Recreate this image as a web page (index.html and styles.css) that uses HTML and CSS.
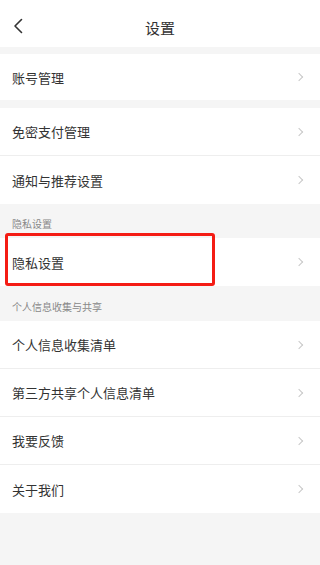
FILE: index.html
```html
<!DOCTYPE html>
<html lang="zh-CN">
<head>
<meta charset="utf-8">
<title>设置</title>
<link rel="stylesheet" href="styles.css">
</head>
<body>
<div class="page">
  <header class="nav">
    <span class="back">
      <svg width="12" height="16" viewBox="0 0 12 16"><path d="M9.5 1.5 L3 8 L9.5 14.5" fill="none" stroke="#333" stroke-width="1.6" stroke-linecap="round" stroke-linejoin="round"/></svg>
    </span>
    <h1 class="title">设置</h1>
  </header>

  <div class="group g1">
    <div class="row short"><span>账号管理</span><i class="arrow"></i></div>
  </div>

  <div class="group g2">
    <div class="row"><span>免密支付管理</span><i class="arrow"></i></div>
    <div class="row"><span>通知与推荐设置</span><i class="arrow"></i></div>
  </div>

  <div class="section s1">隐私设置</div>
  <div class="group">
    <div class="row highlight"><span>隐私设置</span><i class="arrow"></i><div class="mark"></div></div>
  </div>

  <div class="section s2">个人信息收集与共享</div>
  <div class="group">
    <div class="row"><span>个人信息收集清单</span><i class="arrow"></i></div>
    <div class="row"><span>第三方共享个人信息清单</span><i class="arrow"></i></div>
    <div class="row"><span>我要反馈</span><i class="arrow"></i></div>
    <div class="row"><span>关于我们</span><i class="arrow"></i></div>
  </div>
</div>
</body>
</html>
```

FILE: styles.css
```css
html, body {
  margin: 0;
  padding: 0;
  background: #f5f5f5;
  font-family: "Noto Sans CJK SC", "Noto Sans", sans-serif;
}
.page {
  min-height: 565px;
  background: #f5f5f5;
}
.nav {
  height: 47px;
  background: #fff;
  display: flex;
  align-items: center;
  justify-content: center;
  position: relative;
}
.back {
  position: absolute;
  left: 12px;
  top: 18px;
  width: 12px;
  height: 16px;
  display: flex;
}
.title {
  margin: 0;
  font-size: 15px;
  font-weight: normal;
  color: #333;
  line-height: 1;
  padding-top: 8px;
  padding-left: 0;
}
.group {
  background: #fff;
}
.g1 { margin-top: 7px; }
.g2 { margin-top: 8px; }
.row {
  height: 47px;
  display: flex;
  align-items: center;
  justify-content: space-between;
  padding: 0 16px 0 12px;
  font-size: 13px;
  color: #333;
  border-bottom: 1px solid #eee;
  position: relative;
}
.row:last-child { border-bottom: none; height: 48px; }
.row.short { height: 46px; }
.arrow {
  width: 5px;
  height: 5px;
  border-top: 1px solid #c8c8c8;
  border-right: 1px solid #c8c8c8;
  transform: rotate(45deg);
  margin-right: 2px;
}
.section {
  font-size: 10px;
  line-height: 14px;
  color: #888;
  padding: 0 12px;
  box-sizing: border-box;
}
.s1 { height: 34px; padding-top: 13px; }
.s2 { height: 35px; padding-top: 14px; }
.mark {
  position: absolute;
  left: 5px;
  top: -5px;
  width: 204px;
  height: 47px;
  border: 3px solid #f41c14;
  border-radius: 3px;
}
```
